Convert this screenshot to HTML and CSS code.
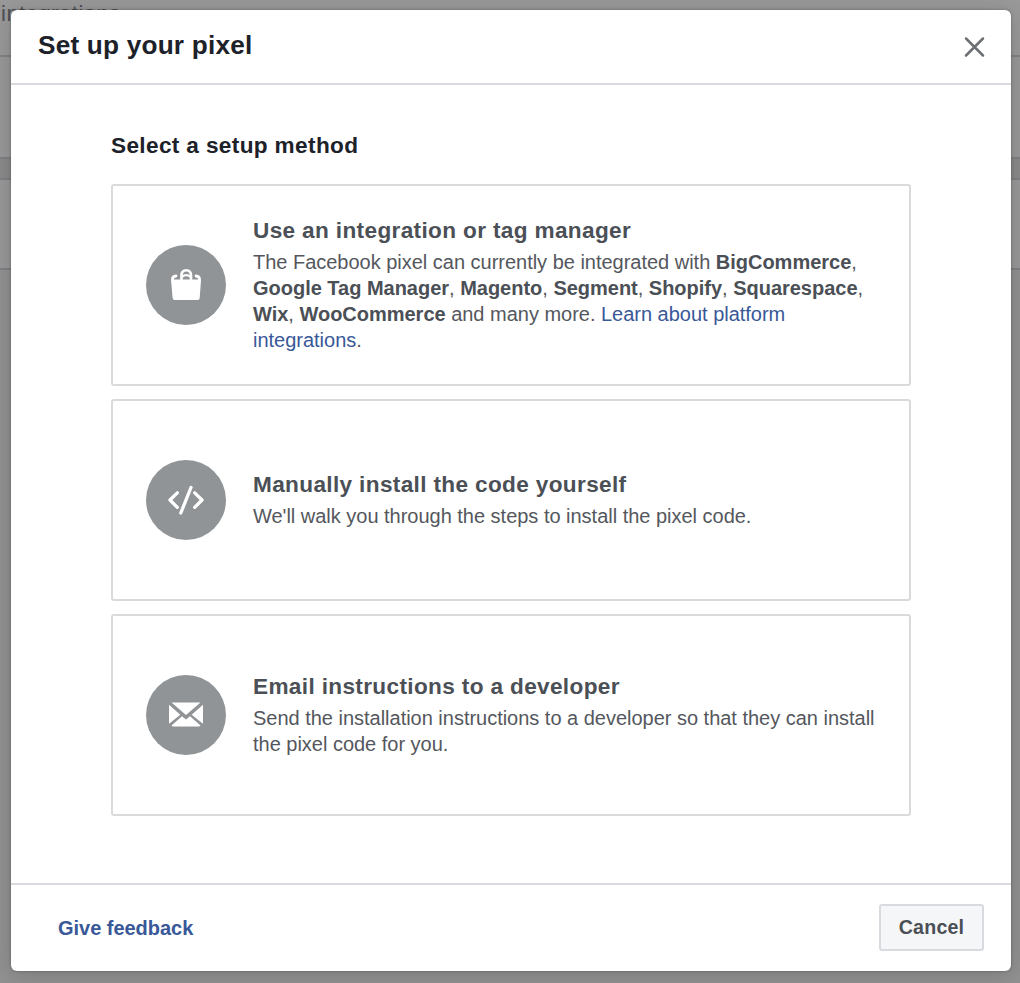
FILE: index.html
```
<!DOCTYPE html>
<html lang="en">
<head>
<meta charset="utf-8">
<title>Set up your pixel</title>
<link rel="stylesheet" href="styles.css">
</head>
<body>
<div class="page">
  <div class="page-intro">integrations</div>
  <div class="page-panel"></div>
  <div class="page-gap"></div>
  <div class="page-panel page-panel-short"></div>
</div>
<main class="dialog">
  <header class="dialog-header">
    <h1 class="dialog-title">Set up your pixel</h1>
    <button class="close" aria-label="Close">
      <svg width="22" height="22" viewBox="0 0 22 22"><path d="M3 2.500 20 19.500M20 2.500 3 19.500" fill="none" stroke="#6c7075" stroke-width="2.500" stroke-linecap="round"/></svg>
    </button>
  </header>
  <section class="dialog-body">
    <h2 class="section-title">Select a setup method</h2>
    <div class="methods">
      <article class="method">
        <svg class="method-icon" viewBox="0 0 80 80">
          <circle cx="40" cy="40" r="40" fill="#909497"/>
          <path d="M27 34.500H53Q55 34.500 54.900 36.500L53.700 53Q53.500 55 51.700 55H28.500Q26.800 55 26.600 53L25.200 36.500Q25 34.500 27 34.500Z" fill="#fff"/>
          <path d="M26.500 36V34.200Q26.500 31.500 30 31M53.500 36V34.200Q53.500 31.500 50 31" fill="none" stroke="#fff" stroke-width="2.800" stroke-linecap="round"/>
          <path d="M35.500 35.500V30.500Q35.500 25.200 40.200 25.200Q45 25.200 45 30.500V35.500" fill="none" stroke="#fff" stroke-width="2.600"/>
          <path d="M36 31.800Q40.200 28.500 44.500 31.800" fill="none" stroke="#fff" stroke-width="2.200"/>
        </svg>
        <div class="method-copy">
          <h3 class="method-title">Use an integration or tag manager</h3>
          <p class="method-text">The Facebook pixel can currently be integrated with <b>BigCommerce</b>, <b>Google Tag Manager</b>, <b>Magento</b>, <b>Segment</b>, <b>Shopify</b>, <b>Squarespace</b>, <b>Wix</b>, <b>WooCommerce</b> and many more. <a class="link">Learn about platform integrations</a>.</p>
        </div>
      </article>
      <article class="method">
        <svg class="method-icon" viewBox="0 0 80 80">
          <circle cx="40" cy="40" r="40" fill="#909497"/>
          <path d="M31.300 32.800 24 40 31.300 47.300M48.700 32.800 56 40 48.700 47.300M45 27.500 34.800 53" fill="none" stroke="#fff" stroke-width="3.300" stroke-linecap="round" stroke-linejoin="round"/>
        </svg>
        <div class="method-copy">
          <h3 class="method-title">Manually install the code yourself</h3>
          <p class="method-text">We'll walk you through the steps to install the pixel code.</p>
        </div>
      </article>
      <article class="method">
        <svg class="method-icon" viewBox="0 0 80 80">
          <circle cx="40" cy="40" r="40" fill="#909497"/>
          <path d="M25.500 27.500H54.500L40 40Z M23 29.800 34.300 39.700 23 48.700Z M57 29.800 45.700 39.700 57 48.700Z M36 41.200 40 44.500 44 41.200 54.500 50.500Q54 51.500 52.500 51.500H27.500Q26 51.500 25.500 50.500Z" fill="#fff"/>
        </svg>
        <div class="method-copy">
          <h3 class="method-title">Email instructions to a developer</h3>
          <p class="method-text">Send the installation instructions to a developer so that they can install the pixel code for you.</p>
        </div>
      </article>
    </div>
  </section>
  <footer class="dialog-footer">
    <a class="feedback">Give feedback</a>
    <button class="cancel">Cancel</button>
  </footer>
</main>
</body>
</html>
```
FILE: styles.css
```
* { box-sizing: border-box; }
body {
  margin: 0;
  width: 1020px;
  height: 983px;
  overflow: hidden;
  padding: 10px 9px 12px 11px;
  background: #919191;
  font-family: "Liberation Sans", Arial, sans-serif;
}
h1, h2, h3, p { margin: 0; }
.page { position: absolute; inset: 0; overflow: hidden; }
.page-intro {
  height: 57px;
  padding-left: 1px;
  border-bottom: 2px solid #838387;
  background: #999;
  color: #4c4f55;
  font-size: 22px;
  line-height: 28px;
  letter-spacing: .5px;
}
.page-panel { height: 100px; background: #989898; }
.page-gap {
  height: 23px;
  border: solid #7f7f84;
  border-width: 2px 0;
  background: #8a8a8a;
}
.page-panel-short { height: 90px; border-bottom: 2px solid #7f7f84; }
.dialog {
  position: relative;
  display: flex;
  flex-direction: column;
  height: 961px;
  border-radius: 6px;
  background: #fff;
  box-shadow: 0 4px 24px rgba(0, 0, 0, .16), 0 0 3px rgba(0, 0, 0, .3);
}
.dialog-header {
  display: flex;
  align-items: center;
  justify-content: space-between;
  height: 75px;
  padding: 0 26px 2px 27px;
  border-bottom: 2px solid #dadbe0;
}
.dialog-title {
  padding-bottom: 2px;
  font-size: 26.2px;
  line-height: 32px;
  letter-spacing: .2px;
  color: #1d2129;
}
.close { display: flex; padding: 2px 0 0; border: 0; background: none; }
.dialog-body { flex: 1; padding: 46px 100px 0; }
.section-title {
  font-size: 22.6px;
  line-height: 30px;
  letter-spacing: .36px;
  color: #1d2129;
}
.methods { display: grid; gap: 13px; margin-top: 23px; }
.method {
  display: flex;
  align-items: center;
  gap: 27px;
  height: 202px;
  padding: 0 33px;
  border: 2px solid #dadadc;
  border-radius: 3px;
}
.method-icon { flex: none; width: 80px; height: 80px; }
.method-copy { padding-bottom: 1px; }
.method-title {
  font-size: 22.6px;
  line-height: 30px;
  letter-spacing: .35px;
  color: #4b4f56;
}
.method-text {
  margin-top: 3px;
  font-size: 20px;
  line-height: 26px;
  letter-spacing: -.015px;
  color: #54575d;
}
.method-text b { color: #4b4f56; }
.link { color: #385898; }
.dialog-footer {
  display: flex;
  align-items: center;
  justify-content: space-between;
  height: 88px;
  padding: 0 27px 1px 47px;
  border-top: 2px solid #dadbe0;
}
.feedback {
  padding-top: 2px;
  font-size: 20px;
  font-weight: 700;
  letter-spacing: -.03px;
  color: #385898;
}
.cancel {
  width: 105px;
  height: 47px;
  padding: 0;
  border: 2px solid #d8dadf;
  border-radius: 3px;
  background: #f5f6f7;
  color: #4b4f56;
  font: 700 19.6px "Liberation Sans", Arial, sans-serif;
  letter-spacing: .2px;
}
```
